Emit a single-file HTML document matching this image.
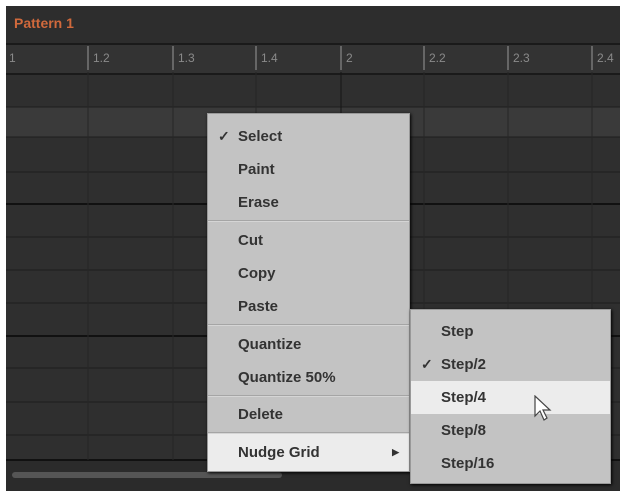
<!DOCTYPE html><html><head><style>
body{margin:0;width:626px;height:493px;background:#fff;position:relative;overflow:hidden;font-family:"Liberation Sans",sans-serif}
.p{position:absolute;left:6px;top:6px;width:614px;height:485px;background:#2f2f2f}
.a{position:absolute}
.m{position:absolute;background:#c3c3c3;box-shadow:1px 1px 3px #000;border:1px solid #999}
.i{position:absolute;left:0;right:0;height:33px;line-height:33px;font-weight:bold;font-size:15px;color:#333;padding-left:30px}
.s{position:absolute;left:0;right:0;height:1px;background:#a5a5a5;border-bottom:1px solid #d5d5d5}
.h{background:#ececec}
.ck{position:absolute;left:10px;font-size:14px}
</style></head><body>
<div class="p">
<div class="a" style="left:0;top:0;width:614px;height:37px;background:#2d2d2d"></div>
<div class="a" style="left:8px;top:9px;color:#d0693c;font-weight:bold;font-size:14px">Pattern 1</div>
<div class="a" style="left:0;top:37px;width:614px;height:28px;background:#333;border-top:2px solid #1a1a1a;border-bottom:2px solid #1a1a1a;color:#888;font-size:12px"></div>
<div class="a" style="left:0;top:101px;width:614px;height:30px;background:#3a3a3a"></div>
<div class="a" style="left:0;top:454px;width:614px;height:31px;background:#2b2b2b"></div>
<div class="a" style="left:6px;top:466px;width:270px;height:6px;background:#555;border-radius:3px"></div>
</div>
<svg class="a" style="left:0;top:0" width="626" height="493">
<g stroke="#1e1e1e" stroke-width="1">
<line x1="6" y1="107" x2="620" y2="107"/><line x1="6" y1="137" x2="620" y2="137"/><line x1="6" y1="172" x2="620" y2="172"/>
<line x1="6" y1="237" x2="620" y2="237"/><line x1="6" y1="270" x2="620" y2="270"/><line x1="6" y1="303" x2="620" y2="303"/>
<line x1="6" y1="368" x2="620" y2="368"/><line x1="6" y1="402" x2="620" y2="402"/><line x1="6" y1="435" x2="620" y2="435"/>
</g>
<g stroke="#111" stroke-width="2"><line x1="6" y1="204" x2="620" y2="204"/><line x1="6" y1="336" x2="620" y2="336"/><line x1="6" y1="460" x2="620" y2="460"/></g>
<g stroke="#262626" stroke-width="1">
<line x1="88" y1="72" x2="88" y2="460"/><line x1="173" y1="72" x2="173" y2="460"/><line x1="256" y1="72" x2="256" y2="460"/><line x1="341" y1="72" x2="341" y2="460" stroke="#151515"/><line x1="424" y1="72" x2="424" y2="460"/><line x1="508" y1="72" x2="508" y2="460"/><line x1="592" y1="72" x2="592" y2="460"/>
</g>
<g stroke="#999" stroke-width="1">
<line x1="88" y1="46" x2="88" y2="70"/><line x1="173" y1="46" x2="173" y2="70"/><line x1="256" y1="46" x2="256" y2="70"/><line x1="341" y1="46" x2="341" y2="70"/><line x1="424" y1="46" x2="424" y2="70"/><line x1="508" y1="46" x2="508" y2="70"/><line x1="592" y1="46" x2="592" y2="70"/>
</g>
<g fill="#8a8a8a" font-family="Liberation Sans" font-size="12">
<text x="9" y="62">1</text><text x="93" y="62">1.2</text><text x="178" y="62">1.3</text><text x="261" y="62">1.4</text><text x="346" y="62">2</text><text x="429" y="62">2.2</text><text x="513" y="62">2.3</text><text x="597" y="62">2.4</text>
</g>
</svg>
<div class="m" style="left:207px;top:113px;width:201px;height:357px">
<div class="i" style="top:6px"><span class="ck">✓</span>Select</div>
<div class="i" style="top:39px">Paint</div>
<div class="i" style="top:72px">Erase</div>
<div class="s" style="top:106px"></div>
<div class="i" style="top:110px">Cut</div>
<div class="i" style="top:143px">Copy</div>
<div class="i" style="top:176px">Paste</div>
<div class="s" style="top:210px"></div>
<div class="i" style="top:214px">Quantize</div>
<div class="i" style="top:247px">Quantize 50%</div>
<div class="s" style="top:281px"></div>
<div class="i" style="top:284px">Delete</div>
<div class="s" style="top:318px"></div>
<div class="i h" style="top:320px;height:37px;line-height:37px">Nudge Grid<span style="position:absolute;right:10px;font-size:9px">▶</span></div>
</div>
<div class="m" style="left:410px;top:309px;width:199px;height:173px">
<div class="i" style="top:5px">Step</div>
<div class="i" style="top:38px"><span class="ck">✓</span>Step/2</div>
<div class="i h" style="top:71px">Step/4</div>
<div class="i" style="top:104px">Step/8</div>
<div class="i" style="top:137px">Step/16</div>
</div>
<svg class="a" style="left:533px;top:395px" width="20" height="28"><path d="M2 1 L2 21 L7 16 L11 25 L14 23 L10 15 L17 15 Z" fill="#fff" stroke="#444" stroke-width="1.2"/></svg>
</body></html>
